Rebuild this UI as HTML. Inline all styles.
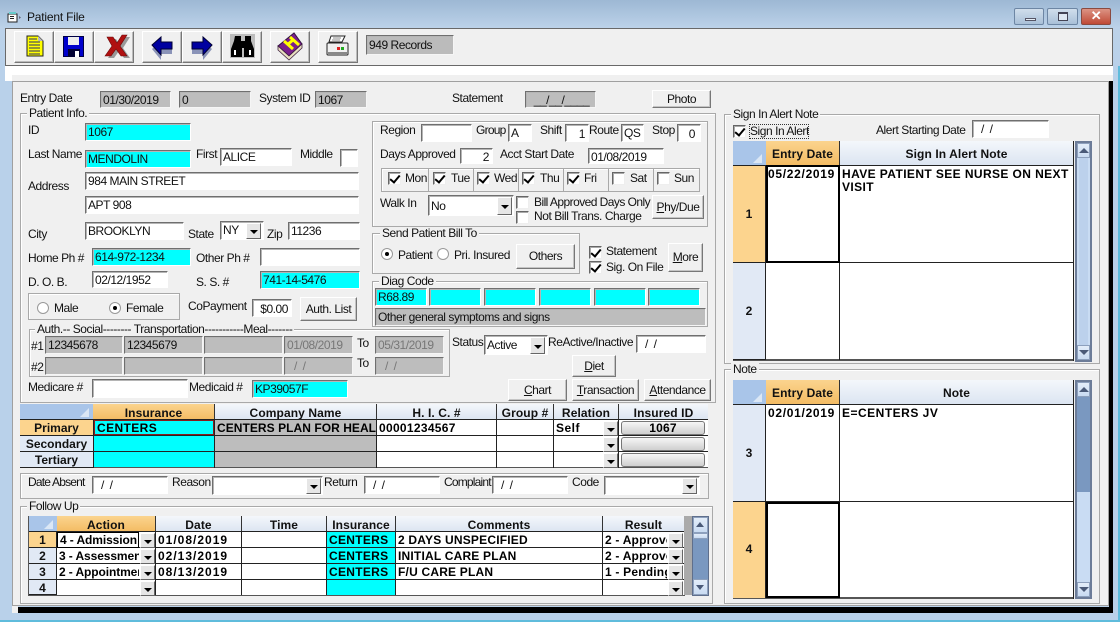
<!DOCTYPE html>
<html><head><meta charset="utf-8"><title>Patient File</title>
<style>
html,body{margin:0;padding:0}
body{width:1120px;height:622px;position:relative;overflow:hidden;background:#b9d1ea;font:12px "Liberation Sans",sans-serif;color:#111;letter-spacing:-.45px}
div,span.a{position:absolute;box-sizing:border-box}
.l{white-space:nowrap;line-height:14px;height:14px}
.i{background:#fff;border:1px solid;border-color:#6f6f6f #fff #fff #6f6f6f;box-shadow:inset 1px 1px 0 #b5b5b5;white-space:nowrap;overflow:hidden;padding:1px 0 0 2px;line-height:14px}
.c{background:#0ff}.g{background:#bdbdbd;border-color:#6f6f6f #f5f5f5 #f5f5f5 #6f6f6f}
.d{color:#777}
.r{text-align:right;padding-right:3px}
.b{background:#f0f0f0;border:1px solid;border-color:#fff #777 #777 #fff;box-shadow:inset -1px -1px 0 #c4c4c4;text-align:center;white-space:nowrap;line-height:18px}
.gb{border:1px solid #a9a9a9;box-shadow:inset 1px 1px 0 #fff}
.lg{background:#f0f0f0;padding:0 2px;line-height:13px;height:13px;white-space:nowrap}
.k{width:13px;height:13px;background:#fff;border:1px solid;border-color:#666 #eee #eee #666;box-shadow:inset 1px 1px 0 #aaa}
.k.x:after{content:"";position:absolute;left:3px;top:0;width:4px;height:8px;border:solid #000;border-width:0 2px 2px 0;transform:rotate(40deg)}
.o{width:12px;height:12px;border-radius:50%;background:#fff;border:1px solid #999}
.o.x:after{content:"";position:absolute;left:3px;top:3px;width:4px;height:4px;border-radius:50%;background:#000}
.ar{background:#e6e6e6;border:1px solid;border-color:#fff #666 #666 #fff;width:15px}
.ar:after{content:"";position:absolute;left:3px;top:50%;margin-top:-1px;border:4px solid transparent;border-top:4px solid #000;border-bottom:0}
.gr{font-weight:bold;letter-spacing:.2px;color:#000;white-space:nowrap;overflow:hidden;line-height:17px}
.gd{letter-spacing:1px}
.h{background:linear-gradient(#f4f7fb,#dbe4f1);border-right:1px solid #333;text-align:center;font-weight:bold;letter-spacing:.1px;line-height:18px;white-space:nowrap;overflow:hidden}
.ho{background:linear-gradient(#fbd48e,#f3bb62);border-right:1px solid #333;text-align:center;font-weight:bold;letter-spacing:.1px;line-height:18px;white-space:nowrap}
.rh{background:#e1e9f5;text-align:center;font-weight:bold;letter-spacing:0;white-space:nowrap;border-bottom:1px solid #222;border-right:1px solid #222;line-height:16px}
.ro{background:#fcd48e}
.corner{background:#a9c5e9}
.corner:after{content:"";position:absolute;right:4px;bottom:3px;border:solid transparent;border-width:0 0 9px 9px;border-bottom-color:#dbe7f5}
.ln{background:#222}
.tb{background:#f0f0f0;border:1px solid;border-color:#fff #777 #777 #fff;box-shadow:inset -1px -1px 0 #bbb}
.sb{background:#6f7f9c}
.sa{background:linear-gradient(#e3edf9,#c9dbf2);border:1px solid #8da0bd}
</style></head><body>

<!-- window chrome -->
<div style="left:0;top:0;width:1120px;height:66px;background:linear-gradient(#9db8d4,#bcd2e9 28px,#b9d1ea)"></div>
<svg style="position:absolute;left:7px;top:11px" width="16" height="12" viewBox="0 0 16 12"><path d="M1 3h9v8H1z" fill="#fff" stroke="#222"/><path d="M2 1h7v2H2z" fill="#6cc"/><path d="M3 5h4v1H3zM3 7h4v1H3z" fill="#222"/><path d="M12 5l2 1.5-2 1.5z" fill="#667"/></svg>
<div class="l" style="left:27px;top:10px;color:#111;letter-spacing:-.2px">Patient File</div>
<div style="left:1014px;top:8px;width:30px;height:17px;border:1px solid #6d86a4;border-radius:2px;background:linear-gradient(#d0deec,#a9c0d8)"><div style="left:10px;top:9px;width:11px;height:3px;background:#e6eef6;border:1px solid #556"></div></div>
<div style="left:1047px;top:8px;width:31px;height:17px;border:1px solid #6d86a4;border-radius:2px;background:linear-gradient(#d0deec,#a9c0d8)"><div style="left:10px;top:3px;width:10px;height:9px;background:#dfe8f2;border:1px solid #445;border-top-width:2px"></div></div>
<div style="left:1081px;top:8px;width:30px;height:17px;border:1px solid #8a4a40;border-radius:2px;background:linear-gradient(#dc9384,#bf4a36)"><div class="l" style="left:0;width:28px;top:0;text-align:center;color:#fff;font-weight:bold;font-size:13px">✕</div></div>

<!-- toolbar -->
<div style="left:5px;top:28px;width:1108px;height:38px;background:#f0f0f0;border:1px solid #696969"></div>
<div style="left:5px;top:66px;width:1108px;height:15px;background:#fff"></div>
<div class="tb" style="left:14px;top:31px;width:40px;height:32px"></div>
<div class="tb" style="left:54px;top:31px;width:40px;height:32px"></div>
<div class="tb" style="left:94px;top:31px;width:40px;height:32px"></div>
<div class="tb" style="left:142px;top:31px;width:40px;height:32px"></div>
<div class="tb" style="left:182px;top:31px;width:40px;height:32px"></div>
<div class="tb" style="left:222px;top:31px;width:40px;height:32px"></div>
<div class="tb" style="left:270px;top:31px;width:40px;height:32px"></div>
<div class="tb" style="left:318px;top:31px;width:40px;height:32px"></div>
<svg style="position:absolute;left:0;top:28px" width="360" height="38" viewBox="0 0 360 38">
<path d="M27 8h11l5 5v15H27z" fill="#ff0" stroke="#222"/><path d="M29 11h8M29 14h11M29 17h11M29 20h11M29 23h11M29 26h11" stroke="#555" stroke-width="1.2"/><path d="M38 8v5h5z" fill="#bbb"/>
<path d="M63 8h21v21H63z" fill="#004"/><path d="M64 9h19v19H64z" fill="#00c"/><path d="M68 9h11v8H68z" fill="#eee"/><path d="M68 21h12v8H68z" fill="#003"/><path d="M75 23h4v6h-4z" fill="#fff"/>
<path d="M105 28l7-10-5-9h6l4 6 5-8h5l-7 11 7 10h-6l-5-7-5 7z" fill="#999" transform="translate(3 2)"/><path d="M105 28l7-10-5-9h6l4 6 5-8h5l-7 11 7 10h-6l-5-7-5 7z" fill="#b01010" stroke="#6a0808" stroke-width=".6"/>
<path d="M152 18l9-8v5h11v8h-11v6z" fill="#8a93b8" transform="translate(0 3)"/><path d="M152 17l9-8v5h11v7h-11v6z" fill="#0000a0" stroke="#003"/>
<path d="M212 18l-9-8v5h-11v8h11v6z" fill="#8a93b8" transform="translate(0 3)"/><path d="M212 17l-9-8v5h-11v7h11v6z" fill="#0000a0" stroke="#003"/>
<path d="M230 6h25v24h-25z" fill="#bdbdbd"/><path d="M235 8h6v5h4V8h6v5l3 8v8h-10v-9h-2v9h-11v-8l3-8z" fill="#000"/><path d="M234 22h2v5h-2zM249 22h2v5h-2z" fill="#fff"/>
<path d="M294 5l-16 13 11 10 13-12z" fill="#7a1f8c" stroke="#301040"/><path d="M278 18v4l11 10 13-12v-4l-13 12z" fill="#e8dfc0" stroke="#402040" stroke-width=".8"/><path d="M284 13l9 8M290 9l9 8M287 17l6-5" stroke="#ff0" stroke-width="3" fill="none"/>
<path d="M331 8h14l-3 6h-13z" fill="#fff" stroke="#222"/><path d="M333 10h8M332 12h8" stroke="#888"/><rect x="327" y="15" width="21" height="12" rx="1" fill="#f0f0f0" stroke="#222"/><path d="M327 25h21" stroke="#888" stroke-width="2"/><path d="M337 19h3v3h-3z" fill="#d22"/><path d="M341 19h3v3h-3z" fill="#2a2"/>
</svg>
<div class="i g" style="left:366px;top:35px;width:88px;height:20px;background:#bbb;padding-top:2px">949 Records</div>

<!-- main panel -->
<div style="left:12px;top:75px;width:1101px;height:6px;background:#f0f0f0"></div>
<div style="left:12px;top:81px;width:1097px;height:525px;background:#f0f0f0;border:1px solid #a0a0a0"></div>
<div style="left:12px;top:606px;width:6px;height:7px;background:#f0f0f0"></div>
<div style="left:1109px;top:81px;width:4px;height:532px;background:#000"></div>
<div style="left:18px;top:607px;width:1095px;height:6px;background:#000"></div>
<div style="left:0;top:620px;width:1120px;height:2px;background:#5fbcdc"></div>
<div style="left:1118px;top:66px;width:2px;height:556px;background:#5fbcdc"></div>

<!-- top row -->
<div class="l" style="left:20px;top:91px">Entry Date</div>
<div class="i g" style="left:100px;top:91px;width:71px;height:17px">01/30/2019</div>
<div class="i g" style="left:179px;top:91px;width:72px;height:17px">0</div>
<div class="l" style="left:259px;top:91px">System ID</div>
<div class="i g" style="left:315px;top:91px;width:52px;height:17px">1067</div>
<div class="l" style="left:452px;top:91px">Statement</div>
<div class="i g" style="left:525px;top:91px;width:71px;height:17px;text-align:center">__/__/____</div>
<div class="b" style="left:652px;top:90px;width:59px;height:18px;line-height:16px">Photo</div>

<!-- Patient Info group -->
<div class="gb" style="left:20px;top:113px;width:696px;height:290px"></div>
<div class="lg" style="left:27px;top:107px">Patient Info.</div>
<div class="l" style="left:28px;top:123px">ID</div>
<div class="i c" style="left:85px;top:123px;width:106px;height:18px">1067</div>
<div class="l" style="left:28px;top:147px">Last Name</div>
<div class="i c" style="left:85px;top:150px;width:106px;height:18px">MENDOLIN</div>
<div class="l" style="left:196px;top:147px">First</div>
<div class="i" style="left:220px;top:148px;width:72px;height:18px">ALICE</div>
<div class="l" style="left:300px;top:147px">Middle</div>
<div class="i" style="left:340px;top:149px;width:18px;height:18px"></div>
<div class="l" style="left:28px;top:179px">Address</div>
<div class="i" style="left:85px;top:172px;width:274px;height:18px">984 MAIN STREET</div>
<div class="i" style="left:85px;top:196px;width:274px;height:18px">APT 908</div>
<div class="l" style="left:28px;top:227px">City</div>
<div class="i" style="left:85px;top:222px;width:99px;height:18px">BROOKLYN</div>
<div class="l" style="left:188px;top:227px">State</div>
<div class="i" style="left:220px;top:221px;width:44px;height:19px">NY</div><div class="ar" style="left:246px;top:223px;height:16px"></div>
<div class="l" style="left:267px;top:227px">Zip</div>
<div class="i" style="left:288px;top:222px;width:72px;height:18px">11236</div>
<div class="l" style="left:28px;top:251px">Home Ph #</div>
<div class="i c" style="left:92px;top:248px;width:99px;height:18px">614-972-1234</div>
<div class="l" style="left:196px;top:251px">Other Ph #</div>
<div class="i" style="left:260px;top:248px;width:100px;height:18px"></div>
<div class="l" style="left:28px;top:275px">D. O. B.</div>
<div class="i" style="left:92px;top:271px;width:76px;height:17px">02/12/1952</div>
<div class="l" style="left:196px;top:275px">S. S. #</div>
<div class="i c" style="left:260px;top:271px;width:100px;height:18px">741-14-5476</div>
<div class="gb" style="left:28px;top:293px;width:152px;height:27px"></div>
<div class="o" style="left:37px;top:302px"></div><div class="l" style="left:54px;top:301px">Male</div>
<div class="o x" style="left:109px;top:302px"></div><div class="l" style="left:126px;top:301px">Female</div>
<div class="l" style="left:188px;top:299px">CoPayment</div>
<div class="i r" style="left:252px;top:299px;width:40px;height:18px;padding-top:2px">$0.00</div>
<div class="b" style="left:300px;top:297px;width:57px;height:24px;line-height:22px">Auth. List</div>

<!-- Auth group -->
<div class="gb" style="left:29px;top:329px;width:421px;height:48px"></div>
<div class="lg" style="left:35px;top:323px">Auth.-- Social-------- Transportation-----------Meal-------</div>
<div class="l" style="left:31px;top:339px">#1</div>
<div class="i g" style="left:45px;top:336px;width:78px;height:18px">12345678</div>
<div class="i g" style="left:124px;top:336px;width:79px;height:18px">12345679</div>
<div class="i g" style="left:204px;top:336px;width:79px;height:18px"></div>
<div class="i g d" style="left:284px;top:336px;width:69px;height:18px">01/08/2019</div>
<div class="l" style="left:357px;top:336px">To</div>
<div class="i g d" style="left:375px;top:336px;width:69px;height:18px">05/31/2019</div>
<div class="l" style="left:31px;top:360px">#2</div>
<div class="i g" style="left:45px;top:357px;width:78px;height:18px"></div>
<div class="i g" style="left:124px;top:357px;width:79px;height:18px"></div>
<div class="i g" style="left:204px;top:357px;width:79px;height:18px"></div>
<div class="i g d" style="left:284px;top:357px;width:69px;height:18px;padding-left:9px">/ &nbsp;/</div>
<div class="l" style="left:357px;top:356px">To</div>
<div class="i g d" style="left:375px;top:357px;width:69px;height:18px;padding-left:9px">/ &nbsp;/</div>
<div class="l" style="left:28px;top:380px">Medicare #</div>
<div class="i" style="left:92px;top:379px;width:96px;height:19px"></div>
<div class="l" style="left:189px;top:380px">Medicaid #</div>
<div class="i c" style="left:252px;top:380px;width:96px;height:18px">KP39057F</div>
<div class="l" style="left:452px;top:335px">Status</div>
<div class="i" style="left:484px;top:335px;width:64px;height:20px;padding-top:2px">Active</div><div class="ar" style="left:530px;top:337px;height:17px"></div>
<div class="l" style="left:548px;top:335px">ReActive/Inactive</div>
<div class="i" style="left:636px;top:335px;width:70px;height:18px;padding-left:8px">/ &nbsp;/</div>
<div class="b" style="left:572px;top:355px;width:44px;height:22px;line-height:20px"><u>D</u>iet</div>
<div class="b" style="left:508px;top:379px;width:59px;height:22px;line-height:20px"><u>C</u>hart</div>
<div class="b" style="left:572px;top:379px;width:67px;height:22px;line-height:20px"><u>T</u>ransaction</div>
<div class="b" style="left:644px;top:379px;width:67px;height:22px;line-height:20px"><u>A</u>ttendance</div>

<!-- Region group -->
<div class="gb" style="left:372px;top:121px;width:336px;height:106px"></div>
<div class="l" style="left:380px;top:123px">Region</div><div class="i" style="left:421px;top:124px;width:51px;height:18px"></div>
<div class="l" style="left:476px;top:123px;letter-spacing:-.75px">Group</div><div class="i" style="left:508px;top:124px;width:24px;height:18px">A</div>
<div class="l" style="left:540px;top:123px">Shift</div><div class="i r" style="left:565px;top:124px;width:24px;height:18px;padding-top:2px">1</div>
<div class="l" style="left:589px;top:123px">Route</div><div class="i" style="left:621px;top:124px;width:23px;height:18px">QS</div>
<div class="l" style="left:652px;top:123px">Stop</div><div class="i r" style="left:677px;top:124px;width:24px;height:18px;padding:2px 5px 0 0">0</div>
<div class="l" style="left:380px;top:147px">Days Approved</div><div class="i r" style="left:460px;top:148px;width:33px;height:16px">2</div>
<div class="l" style="left:500px;top:147px">Acct Start Date</div><div class="i" style="left:588px;top:148px;width:76px;height:16px">01/08/2019</div>
<div class="gb" style="left:381px;top:168px;width:319px;height:24px"></div>
<div style="left:428px;top:168px;width:1px;height:24px;background:#a9a9a9"></div><div style="left:473px;top:168px;width:1px;height:24px;background:#a9a9a9"></div><div style="left:518px;top:168px;width:1px;height:24px;background:#a9a9a9"></div><div style="left:563px;top:168px;width:1px;height:24px;background:#a9a9a9"></div><div style="left:608px;top:168px;width:1px;height:24px;background:#a9a9a9"></div><div style="left:653px;top:168px;width:1px;height:24px;background:#a9a9a9"></div>
<div class="k x" style="left:388px;top:172px"></div><div class="l" style="left:405px;top:171px">Mon</div>
<div class="k x" style="left:433px;top:172px"></div><div class="l" style="left:451px;top:171px">Tue</div>
<div class="k x" style="left:477px;top:172px"></div><div class="l" style="left:494px;top:171px">Wed</div>
<div class="k x" style="left:522px;top:172px"></div><div class="l" style="left:540px;top:171px">Thu</div>
<div class="k x" style="left:567px;top:172px"></div><div class="l" style="left:584px;top:171px">Fri</div>
<div class="k" style="left:612px;top:172px"></div><div class="l" style="left:630px;top:171px">Sat</div>
<div class="k" style="left:657px;top:172px"></div><div class="l" style="left:674px;top:171px">Sun</div>
<div class="l" style="left:380px;top:196px">Walk In</div>
<div class="i" style="left:428px;top:195px;width:86px;height:21px;padding-top:3px">No</div><div class="ar" style="left:497px;top:197px;height:18px"></div>
<div class="k" style="left:516px;top:196px"></div><div class="l" style="left:534px;top:195px;letter-spacing:-.55px">Bill Approved Days Only</div>
<div class="k" style="left:516px;top:211px"></div><div class="l" style="left:534px;top:209px">Not Bill Trans. Charge</div>
<div class="b" style="left:652px;top:195px;width:52px;height:24px;line-height:22px"><u>P</u>hy/Due</div>

<!-- Send group -->
<div class="gb" style="left:372px;top:233px;width:208px;height:41px"></div>
<div class="lg" style="left:380px;top:227px">Send Patient Bill To</div>
<div class="o x" style="left:381px;top:248px"></div><div class="l" style="left:398px;top:248px">Patient</div>
<div class="o" style="left:437px;top:248px"></div><div class="l" style="left:454px;top:248px">Pri. Insured</div>
<div class="b" style="left:516px;top:244px;width:59px;height:25px;line-height:23px">Others</div>
<div class="k x" style="left:589px;top:246px"></div><div class="l" style="left:606px;top:244px">Statement</div>
<div class="k x" style="left:589px;top:261px"></div><div class="l" style="left:606px;top:260px">Sig. On File</div>
<div class="b" style="left:668px;top:243px;width:35px;height:29px;line-height:27px"><u>M</u>ore</div>

<!-- Diag -->
<div class="gb" style="left:372px;top:281px;width:336px;height:46px"></div>
<div class="lg" style="left:379px;top:275px">Diag Code</div>
<div class="i c" style="left:375px;top:288px;width:52px;height:18px">R68.89</div>
<div class="i c" style="left:429px;top:288px;width:52px;height:18px"></div>
<div class="i c" style="left:484px;top:288px;width:52px;height:18px"></div>
<div class="i c" style="left:539px;top:288px;width:52px;height:18px"></div>
<div class="i c" style="left:594px;top:288px;width:52px;height:18px"></div>
<div class="i c" style="left:648px;top:288px;width:52px;height:18px"></div>
<div class="i g" style="left:375px;top:308px;width:331px;height:18px">Other general symptoms and signs</div>

<!-- Insurance grid -->
<div style="left:20px;top:404px;width:688px;height:64px;background:#fff;border-bottom:1px solid #555"></div>
<div class="corner" style="left:20px;top:404px;width:73px;height:16px"></div>
<div class="ho" style="left:93px;top:404px;width:122px;height:16px">Insurance</div>
<div class="h" style="left:215px;top:404px;width:162px;height:16px">Company Name</div>
<div class="h" style="left:377px;top:404px;width:120px;height:16px">H. I. C. #</div>
<div class="h" style="left:497px;top:404px;width:57px;height:16px">Group #</div>
<div class="h" style="left:554px;top:404px;width:65px;height:16px">Relation</div>
<div class="h" style="left:619px;top:404px;width:89px;height:16px;border-right:0">Insured ID</div>
<div class="rh ro" style="left:20px;top:420px;width:74px;height:16px">Primary</div>
<div class="rh" style="left:20px;top:436px;width:74px;height:16px">Secondary</div>
<div class="rh" style="left:20px;top:452px;width:74px;height:16px">Tertiary</div>
<div style="left:94px;top:420px;width:120px;height:47px;background:#0ff"></div>
<div style="left:215px;top:420px;width:161px;height:47px;background:#bdbdbd"></div>
<div class="ln" style="left:20px;top:419px;width:688px;height:1px"></div>
<div class="ln" style="left:20px;top:435px;width:688px;height:1px"></div>
<div class="ln" style="left:20px;top:451px;width:688px;height:1px"></div>
<div class="ln" style="left:214px;top:420px;width:1px;height:48px"></div>
<div class="ln" style="left:376px;top:420px;width:1px;height:48px"></div>
<div class="ln" style="left:496px;top:420px;width:1px;height:48px"></div>
<div class="ln" style="left:553px;top:420px;width:1px;height:48px"></div>
<div class="ln" style="left:618px;top:420px;width:1px;height:48px"></div>
<div class="gr" style="left:94px;top:420px;width:120px;height:15px;border:1px solid #8a1c1c;padding-left:2px;line-height:15px;letter-spacing:.4px">CENTERS</div>
<div class="gr" style="left:217px;top:420px;width:159px;height:15px;letter-spacing:.05px">CENTERS PLAN FOR HEAL</div>
<div class="gr" style="left:379px;top:420px;width:117px;height:15px;letter-spacing:.3px">00001234567</div>
<div class="gr" style="left:556px;top:420px;width:40px;height:15px;letter-spacing:.5px">Self</div>
<div class="ar" style="left:603px;top:421px;height:15px"></div><div class="ar" style="left:603px;top:437px;height:15px"></div><div class="ar" style="left:603px;top:453px;height:15px"></div>
<div class="gr" style="left:621px;top:421px;width:84px;height:14px;background:linear-gradient(#f6f6f6,#cfcfcf);border:1px solid #777;border-radius:3px;text-align:center;line-height:12px">1067</div>
<div style="left:621px;top:437px;width:84px;height:14px;background:linear-gradient(#f6f6f6,#cfcfcf);border:1px solid #777;border-radius:3px"></div>
<div style="left:621px;top:453px;width:84px;height:14px;background:linear-gradient(#f6f6f6,#cfcfcf);border:1px solid #777;border-radius:3px"></div>

<!-- Date absent -->
<div class="gb" style="left:20px;top:473px;width:689px;height:26px"></div>
<div class="l" style="left:28px;top:475px;letter-spacing:-.8px">Date Absent</div><div class="i" style="left:92px;top:476px;width:76px;height:18px;padding-left:8px">/ &nbsp;/</div>
<div class="l" style="left:172px;top:475px">Reason</div><div class="i" style="left:212px;top:476px;width:111px;height:19px"></div><div class="ar" style="left:306px;top:478px;height:16px"></div>
<div class="l" style="left:324px;top:475px">Return</div><div class="i" style="left:364px;top:476px;width:76px;height:18px;padding-left:8px">/ &nbsp;/</div>
<div class="l" style="left:444px;top:475px;letter-spacing:-.8px">Complaint</div><div class="i" style="left:492px;top:476px;width:76px;height:18px;padding-left:8px">/ &nbsp;/</div>
<div class="l" style="left:572px;top:475px">Code</div><div class="i" style="left:604px;top:476px;width:96px;height:19px"></div><div class="ar" style="left:682px;top:478px;height:16px"></div>

<!-- Follow up -->
<div class="gb" style="left:20px;top:506px;width:693px;height:98px"></div>
<div class="lg" style="left:27px;top:500px">Follow Up</div>
<div style="left:28px;top:516px;width:657px;height:80px;background:#fff;border:1px solid #555"></div>
<div class="corner" style="left:29px;top:516px;width:28px;height:16px"></div>
<div class="ho" style="left:57px;top:516px;width:99px;height:16px">Action</div>
<div class="h" style="left:156px;top:516px;width:86px;height:16px">Date</div>
<div class="h" style="left:242px;top:516px;width:85px;height:16px">Time</div>
<div class="h" style="left:327px;top:516px;width:69px;height:16px">Insurance</div>
<div class="h" style="left:396px;top:516px;width:207px;height:16px">Comments</div>
<div class="h" style="left:603px;top:516px;width:81px;height:16px;border-right:0">Result</div>
<div class="rh ro" style="left:29px;top:532px;width:28px;height:16px">1</div>
<div class="rh" style="left:29px;top:548px;width:28px;height:16px">2</div>
<div class="rh" style="left:29px;top:564px;width:28px;height:16px">3</div>
<div class="rh" style="left:29px;top:580px;width:28px;height:15px">4</div>
<div style="left:327px;top:532px;width:69px;height:63px;background:#0ff"></div>
<div class="ln" style="left:29px;top:531px;width:655px;height:1px"></div>
<div class="ln" style="left:57px;top:547px;width:627px;height:1px"></div>
<div class="ln" style="left:57px;top:563px;width:627px;height:1px"></div>
<div class="ln" style="left:57px;top:579px;width:627px;height:1px"></div>
<div class="ln" style="left:155px;top:532px;width:1px;height:63px"></div>
<div class="ln" style="left:241px;top:532px;width:1px;height:63px"></div>
<div class="ln" style="left:326px;top:532px;width:1px;height:63px"></div>
<div class="ln" style="left:395px;top:532px;width:1px;height:63px"></div>
<div class="ln" style="left:602px;top:532px;width:1px;height:63px"></div>
<div class="gr" style="left:57px;top:532px;width:82px;height:16px;border:1px solid #000;padding-left:2px;line-height:15px;letter-spacing:-.1px">4 - Admission</div>
<div class="gr" style="left:59px;top:548px;width:80px;height:15px;letter-spacing:-.1px">3 - Assessment</div>
<div class="gr" style="left:59px;top:564px;width:80px;height:15px;letter-spacing:-.1px">2 - Appointment</div>
<div class="gr gd" style="left:158px;top:532px;width:83px;height:15px">01/08/2019</div>
<div class="gr gd" style="left:158px;top:548px;width:83px;height:15px">02/13/2019</div>
<div class="gr gd" style="left:158px;top:564px;width:83px;height:15px">08/13/2019</div>
<div class="gr" style="left:329px;top:532px;width:66px;height:15px;letter-spacing:.3px">CENTERS</div>
<div class="gr" style="left:329px;top:548px;width:66px;height:15px;letter-spacing:.3px">CENTERS</div>
<div class="gr" style="left:329px;top:564px;width:66px;height:15px;letter-spacing:.3px">CENTERS</div>
<div class="gr" style="left:398px;top:532px;width:204px;height:15px">2 DAYS UNSPECIFIED</div>
<div class="gr" style="left:398px;top:548px;width:204px;height:15px">INITIAL CARE PLAN</div>
<div class="gr" style="left:398px;top:564px;width:204px;height:15px">F/U CARE PLAN</div>
<div class="gr" style="left:605px;top:532px;width:62px;height:15px">2 - Approved</div>
<div class="gr" style="left:605px;top:548px;width:62px;height:15px">2 - Approved</div>
<div class="gr" style="left:605px;top:564px;width:62px;height:15px">1 - Pending</div>
<div class="ar" style="left:140px;top:533px;height:15px"></div><div class="ar" style="left:140px;top:549px;height:15px"></div><div class="ar" style="left:140px;top:565px;height:15px"></div><div class="ar" style="left:140px;top:581px;height:15px"></div>
<div class="ar" style="left:668px;top:533px;height:15px"></div><div class="ar" style="left:668px;top:549px;height:15px"></div><div class="ar" style="left:668px;top:565px;height:15px"></div><div class="ar" style="left:668px;top:581px;height:15px"></div>
<div style="left:684px;top:516px;width:8px;height:79px;background:#aaa"></div>
<div style="left:692px;top:516px;width:17px;height:80px;background:#7a98c0;border:1px solid #5f6f8c"></div>
<div class="sa" style="left:693px;top:517px;width:15px;height:16px"></div>
<div class="sa" style="left:693px;top:533px;width:15px;height:6px"></div>
<div class="sa" style="left:693px;top:579px;width:15px;height:16px"></div>
<div style="left:696px;top:522px;border:4px solid transparent;border-bottom:5px solid #4a5a78;border-top:0"></div>
<div style="left:696px;top:585px;border:4px solid transparent;border-top:5px solid #4a5a78;border-bottom:0"></div>

<!-- Sign in alert -->
<div class="gb" style="left:724px;top:114px;width:376px;height:250px"></div>
<div class="lg" style="left:731px;top:108px">Sign In Alert Note</div>
<div class="k x" style="left:733px;top:125px"></div>
<div class="l" style="left:749px;top:124px;width:60px;height:15px;outline:1px dotted #333;outline-offset:-1px;padding-left:1px">Sign In Alert</div>
<div class="l" style="left:876px;top:123px">Alert Starting Date</div>
<div class="i" style="left:972px;top:120px;width:77px;height:18px;padding-left:8px">/ &nbsp;/</div>
<div style="left:733px;top:141px;width:341px;height:220px;background:#fff;border-bottom:2px solid #555;border-left:1px solid #555"></div>
<div class="corner" style="left:733px;top:141px;width:33px;height:25px"></div>
<div class="ho" style="left:766px;top:141px;width:74px;height:25px;line-height:27px">Entry Date</div>
<div class="h" style="left:840px;top:141px;width:234px;height:25px;line-height:27px;border-right:1px solid #333">Sign In Alert Note</div>
<div class="rh ro" style="left:733px;top:166px;width:33px;height:97px;line-height:96px">1</div>
<div class="rh" style="left:733px;top:263px;width:33px;height:97px;line-height:96px">2</div>
<div class="ln" style="left:733px;top:165px;width:341px;height:1px"></div>
<div class="ln" style="left:766px;top:262px;width:308px;height:1px"></div>
<div class="ln" style="left:839px;top:166px;width:1px;height:194px"></div>
<div class="ln" style="left:1073px;top:141px;width:1px;height:220px"></div>
<div style="left:766px;top:165px;width:74px;height:98px;border:2px solid #000"></div>
<div class="gr gd" style="left:768px;top:168px;width:71px;height:14px;line-height:13px;letter-spacing:.7px">05/22/2019</div>
<div class="gr" style="left:842px;top:168px;width:230px;height:28px;line-height:13px;white-space:normal;letter-spacing:.4px">HAVE PATIENT SEE NURSE ON NEXT VISIT</div>
<div style="left:1075px;top:141px;width:17px;height:221px;background:#c9dcf3;border:2px solid #6c7c98"></div>
<div class="sa" style="left:1077px;top:143px;width:13px;height:15px"></div>
<div class="sa" style="left:1077px;top:345px;width:13px;height:15px"></div>
<div style="left:1079px;top:158px;width:9px;height:187px;background:#bcd1ec"></div>
<div style="left:1079px;top:148px;border:5px solid transparent;border-bottom:5px solid #4a5a78;border-top:0"></div>
<div style="left:1079px;top:350px;border:5px solid transparent;border-top:5px solid #4a5a78;border-bottom:0"></div>

<!-- Note -->
<div class="gb" style="left:724px;top:369px;width:376px;height:235px"></div>
<div class="lg" style="left:731px;top:363px">Note</div>
<div style="left:733px;top:380px;width:341px;height:219px;background:#fff;border-bottom:2px solid #555;border-left:1px solid #555"></div>
<div class="corner" style="left:733px;top:380px;width:33px;height:25px"></div>
<div class="ho" style="left:766px;top:380px;width:74px;height:25px;line-height:27px">Entry Date</div>
<div class="h" style="left:840px;top:380px;width:234px;height:25px;line-height:27px">Note</div>
<div class="rh" style="left:733px;top:405px;width:33px;height:97px;line-height:96px">3</div>
<div class="rh ro" style="left:733px;top:502px;width:33px;height:96px;line-height:95px;border-bottom:0">4</div>
<div class="ln" style="left:733px;top:404px;width:341px;height:1px"></div>
<div class="ln" style="left:766px;top:501px;width:308px;height:1px"></div>
<div class="ln" style="left:839px;top:405px;width:1px;height:96px"></div>
<div class="ln" style="left:1073px;top:380px;width:1px;height:219px"></div>
<div style="left:766px;top:502px;width:74px;height:96px;border:1px solid #000;box-shadow:inset 0 0 0 1px #000"></div>
<div class="gr gd" style="left:768px;top:405px;width:71px;height:16px;line-height:16px;letter-spacing:.7px">02/01/2019</div>
<div class="gr" style="left:842px;top:405px;width:230px;height:16px;line-height:16px;letter-spacing:.5px">E=CENTERS JV</div>
<div style="left:1075px;top:380px;width:17px;height:219px;background:#c9dcf3;border:2px solid #6c7c98"></div>
<div class="sa" style="left:1077px;top:382px;width:13px;height:15px"></div>
<div style="left:1077px;top:397px;width:13px;height:95px;background:#7a98c0"></div>
<div class="sa" style="left:1077px;top:582px;width:13px;height:15px"></div>
<div style="left:1079px;top:387px;border:5px solid transparent;border-bottom:5px solid #4a5a78;border-top:0"></div>
<div style="left:1079px;top:587px;border:5px solid transparent;border-top:5px solid #4a5a78;border-bottom:0"></div>
</body></html>
